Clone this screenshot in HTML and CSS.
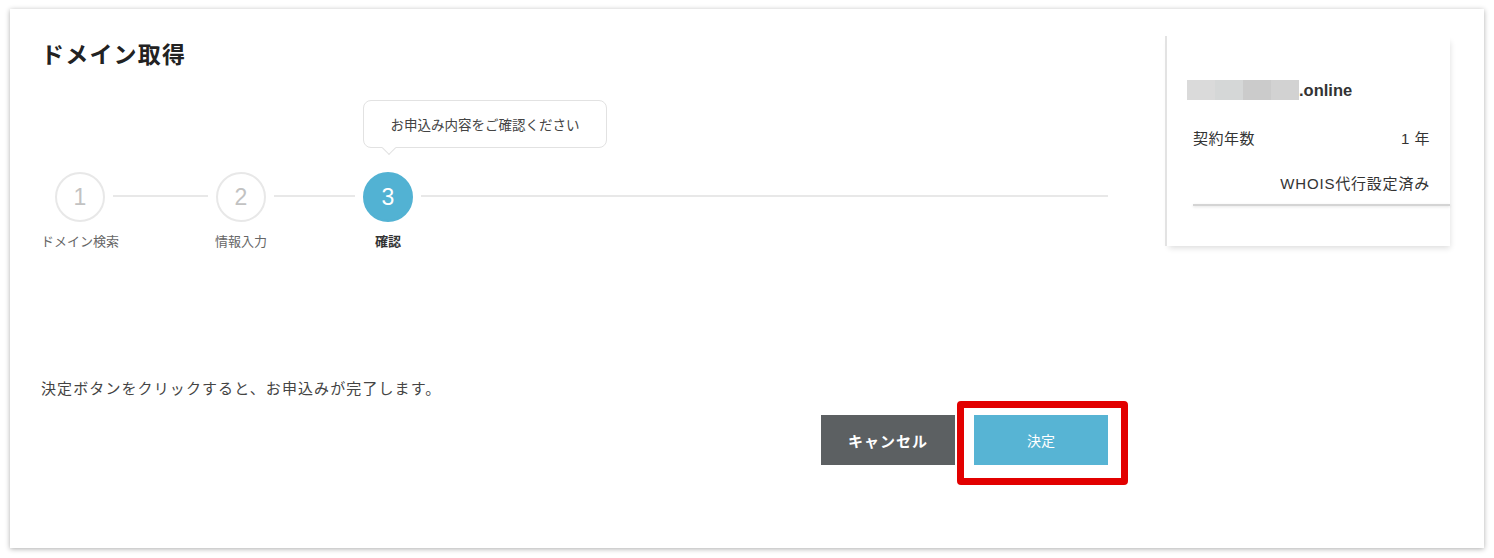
FILE: index.html
```html
<!DOCTYPE html>
<html lang="ja">
<head>
  <meta charset="UTF-8">
  <meta name="viewport" content="width=device-width, initial-scale=1.0">
  <title>ドメイン取得</title>
  <link rel="stylesheet" href="styles.css">
</head>
<body>
  <div class="frame">
    <div class="main">
      <h1>ドメイン取得</h1>

      <div class="steps">
        <div class="step">
          <div class="circle">1</div>
          <div class="step-label">ドメイン検索</div>
        </div>
        <div class="step-line line-1"></div>
        <div class="step">
          <div class="circle">2</div>
          <div class="step-label">情報入力</div>
        </div>
        <div class="step-line line-2"></div>
        <div class="step current">
          <div class="tooltip">お申込み内容をご確認ください</div>
          <div class="circle">3</div>
          <div class="step-label">確認</div>
        </div>
        <div class="step-line line-3"></div>
      </div>

      <p class="message">決定ボタンをクリックすると、お申込みが完了します。</p>

      <div class="buttons">
        <button class="btn btn-cancel">キャンセル</button>
        <div class="highlight">
          <button class="btn btn-submit">決定</button>
        </div>
      </div>
    </div>

    <div class="summary">
      <div class="domain">
        <span class="masked"></span><span class="tld">.online</span>
      </div>
      <div class="row">
        <span>契約年数</span>
        <span>1 年</span>
      </div>
      <div class="row whois">
        <span>WHOIS代行設定済み</span>
      </div>
      <div class="summary-foot"></div>
    </div>
  </div>
</body>
</html>
```

FILE: styles.css
```css
body {
  margin: 0;
  padding: 9px 10px;
  background-color: #fff;
  font-family: "Liberation Sans", "Noto Sans CJK JP", sans-serif;
  color: #333;
}

.frame {
  display: flex;
  align-items: flex-start;
  height: 539px;
  padding: 0 32px 0 31px;
  background-color: #fff;
  box-shadow: 0 1px 5px rgba(0, 0, 0, 0.32);
}

.main {
  width: 1067px;
  padding-top: 31px;
}

h1 {
  margin: 0;
  font-size: 23px;
  line-height: 30px;
  font-weight: bold;
  color: #222;
  letter-spacing: 1.2px;
}

/* progress steps */
.steps {
  display: flex;
  align-items: flex-start;
  margin-top: 102px;
  padding-left: 14px;
}

.step {
  position: relative;
  display: flex;
  flex-direction: column;
  align-items: center;
  width: 50px;
}

.circle {
  box-sizing: border-box;
  width: 50px;
  height: 50px;
  border: 2px solid #e8e8e8;
  border-radius: 50%;
  display: flex;
  align-items: center;
  justify-content: center;
  font-size: 23px;
  color: #c2c2c2;
}

.step.current .circle {
  border-color: #52b2d3;
  background-color: #52b2d3;
  color: #fff;
}

.step-label {
  margin-top: 11px;
  font-size: 13px;
  line-height: 18px;
  color: #666;
  white-space: nowrap;
}

.step.current .step-label {
  color: #333;
  font-weight: bold;
}

.step-line {
  height: 2px;
  margin: 23px 8px 0;
  background-color: #e8e8e8;
}

.line-1 {
  width: 95px;
}

.line-2 {
  width: 81px;
}

.line-3 {
  flex: 1;
  margin-right: 0;
}

.tooltip {
  position: absolute;
  left: 0;
  top: -72px;
  box-sizing: border-box;
  width: 244px;
  height: 48px;
  border: 1.5px solid #e2e2e2;
  border-radius: 8px;
  background-color: #fff;
  display: flex;
  align-items: center;
  justify-content: center;
  font-size: 13.5px;
  color: #444;
  white-space: nowrap;
}

.tooltip::after {
  content: "";
  position: absolute;
  left: 20px;
  bottom: -6px;
  width: 9px;
  height: 9px;
  background-color: #fff;
  border-right: 1.5px solid #e2e2e2;
  border-bottom: 1.5px solid #e2e2e2;
  transform: rotate(45deg);
}

.message {
  margin: 127px 0 0;
  font-size: 15px;
  line-height: 22px;
  letter-spacing: 1.1px;
  color: #444;
}

.buttons {
  display: flex;
  justify-content: flex-end;
  gap: 19px;
  margin-top: 15px;
}

.btn {
  width: 134px;
  height: 50px;
  border: none;
  font-family: inherit;
  color: #fff;
  cursor: pointer;
}

.btn-cancel {
  background-color: #5c6062;
  font-size: 15px;
  font-weight: bold;
  letter-spacing: 1px;
}

.btn-submit {
  display: block;
  background-color: #57b4d4;
  font-size: 14px;
}

/* red annotation around the submit button */
.highlight {
  position: relative;
}

.highlight::after {
  content: "";
  position: absolute;
  top: -14px;
  left: -17px;
  right: -20px;
  bottom: -20px;
  border: 7px solid #e20000;
  border-radius: 4px;
}

/* order summary */
.summary {
  width: 285px;
  height: 210px;
  margin-top: 27px;
  margin-left: 57px;
  border-left: 2px solid #e3e3e3;
  box-shadow: 2px 4px 6px -2px rgba(0, 0, 0, 0.14);
  background-color: #fff;
  box-sizing: border-box;
  padding: 44px 20px 0 26px;
}

.domain {
  display: flex;
  align-items: center;
  margin-left: -6px;
  height: 20px;
}

.masked {
  width: 112px;
  height: 20px;
  background: linear-gradient(to right, #dadada 0, #dadada 28px, #d5d7d7 28px, #d5d7d7 56px, #cbcbcb 56px, #cbcbcb 84px, #d2d2d2 84px);
}

.tld {
  font-size: 16.5px;
  font-weight: bold;
  color: #333;
}

.row {
  display: flex;
  justify-content: space-between;
  margin-top: 30px;
  font-size: 15px;
  line-height: 18px;
  letter-spacing: 0.5px;
  color: #333;
}

.row.whois {
  justify-content: flex-end;
  margin-top: 27px;
  letter-spacing: 0.8px;
}

.summary-foot {
  height: 2px;
  margin: 11px -20px 0 0;
  background-color: #d4d4d4;
  box-shadow: 0 1px 3px rgba(0, 0, 0, 0.12);
}
```
